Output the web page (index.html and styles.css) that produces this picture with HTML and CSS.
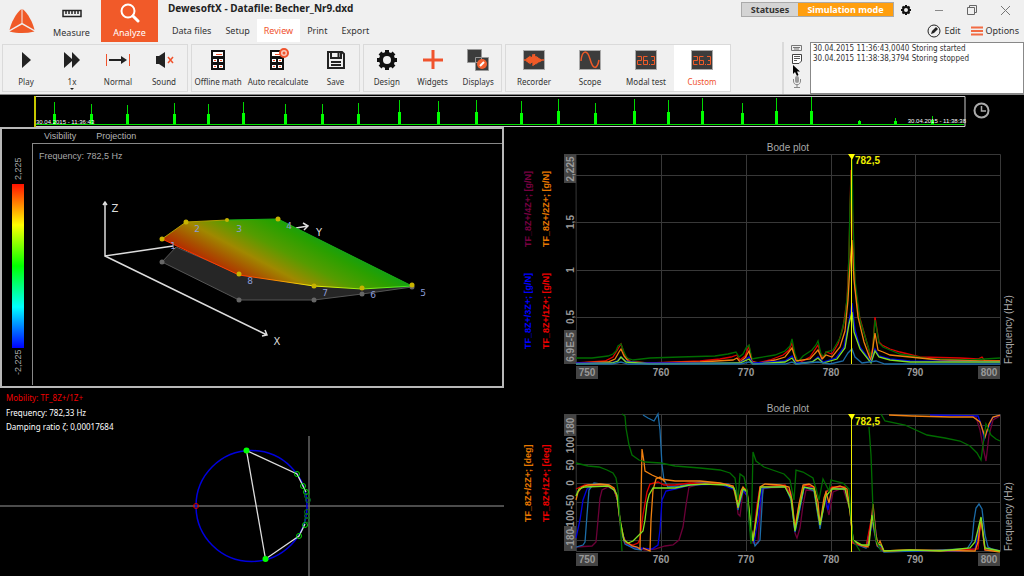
FILE: index.html
```
<!doctype html>
<html lang="en">
<head>
<meta charset="UTF-8">
<title>DewesoftX - Datafile: Becher_Nr9.dxd</title>
	<link rel="stylesheet" href="styles.css">
</head>

<body>
<header class="ribbon">
	<div class="top">
		<div class="logo">
			<svg width="28" height="28" viewBox="0 0 28 28">
				<path fill="#f05a28" d="M13.500 1 L13.500 15 L1.500 22 C3 15 8 5 13.500 1 Z"/>
				<path fill="#f05a28" d="M14.500 1 C20 5 25 15 26.500 22 L14.500 15 Z"/>
				<path fill="#f05a28" d="M14 16.500 L26.500 23.500 C18 25.500 10 25.500 1.500 23.500 Z"/>
			</svg>
		</div>
		<button class="mode">
			<svg width="20" height="22" viewBox="0 0 20 22"><path fill="none" stroke="#222" stroke-width="1.500" d="M1 7.500 H19 V13.500 H1 Z M4 8 V11 M7 8 V11 M10 8 V11 M13 8 V11 M16 8 V11"/></svg>
			Measure
		</button>
		<button class="mode mode-on">
			<svg width="20" height="22" viewBox="0 0 20 22"><circle cx="8" cy="8" r="6.500" fill="none" stroke="#fff" stroke-width="2"/><path stroke="#fff" stroke-width="3" stroke-linecap="round" d="M13 13 L18 18"/></svg>
			Analyze
		</button>
		<div class="document">
			<h1>DewesoftX - Datafile: Becher_Nr9.dxd</h1>
			<nav class="tabs">
				<button>Data files</button>
				<button>Setup</button>
				<button class="tab-on">Review</button>
				<button>Print</button>
				<button>Export</button>
			</nav>
		</div>
		<div class="system">
			<div class="window-row">
				<div class="status">
					<button>Statuses</button>
					<button class="simulation">Simulation mode</button>
				</div>
				<button aria-label="Settings"><svg width="12" height="12" viewBox="0 0 24 24"><use href="#gear"/></svg></button>
				<button aria-label="Minimize"><svg width="10" height="12"><path stroke="#888" d="M1 6.500 H9"/></svg></button>
				<button aria-label="Restore"><svg width="12" height="12"><path fill="none" stroke="#666" d="M1.500 3.500 H8.500 V10.500 H1.500 Z M3.500 3 V1.500 H10.500 V8.500 H9"/></svg></button>
				<button aria-label="Close"><svg width="11" height="12"><path stroke="#777" d="M1 2 L10 11 M10 2 L1 11"/></svg></button>
			</div>
			<div class="edit-row">
				<button><svg width="14" height="14"><circle cx="7" cy="7" r="6" fill="none" stroke="#222"/><path fill="#222" d="M4 10 L5 7 L9 3 L11 5 L7 9 Z"/></svg>Edit</button>
				<button><svg width="12" height="12"><path stroke="#f26b43" stroke-width="2" d="M0 2.500 H12 M0 6 H12 M0 9.500 H12"/></svg>Options</button>
			</div>
		</div>
	</div>

	<div class="toolbar">
		<div class="group play-group">
			<button><svg width="24" height="24"><path fill="#222" d="M8 4 L17 12 L8 20 Z"/></svg>Play</button>
			<button class="speed"><svg width="24" height="24"><path fill="#222" d="M4 4 L12 11 V4 L20 12 L12 20 V13 L4 20 Z"/></svg>1x</button>
			<button><svg width="26" height="24"><path stroke="#f0532d" d="M1.500 6 V18 M24.500 6 V18"/><path stroke="#222" stroke-width="2" d="M4 12 H18"/><path fill="#222" d="M16 8 L22 12 L16 16 Z"/></svg>Normal</button>
			<button><svg width="24" height="24"><path fill="#222" d="M4 8 H7 L13 4 V20 L7 16 H4 Z"/><path stroke="#f0532d" stroke-width="1.500" d="M16 9 L21 15 M21 9 L16 15"/></svg>Sound</button>
		</div>
		<div class="group file-group">
			<button class="offline"><svg width="24" height="24"><use href="#calc"/></svg>Offline math</button>
			<button class="recalc"><svg width="24" height="24"><use href="#calc" x="-1"/><circle cx="18" cy="5" r="4" fill="#f8cabb" stroke="#f0532d" stroke-width="2"/><circle cx="18" cy="5" r="1.500" fill="#f0532d"/></svg>Auto recalculate</button>
			<button class="save"><svg width="24" height="24"><path fill="none" stroke="#222" stroke-width="2" d="M4 4 H18 L20 6 V20 H4 Z M7 4 V10 H17 V4"/><path stroke="#222" stroke-width="2" d="M14.500 5 V9 M7 14 H17 M7 17 H17"/></svg>Save</button>
		</div>
		<div class="group design-group">
			<button><svg width="24" height="24" viewBox="0 0 24 24"><use href="#gear"/></svg>Design</button>
			<button><svg width="24" height="24"><path stroke="#f0532d" stroke-width="3" d="M12 2 V21 M2 12 H22"/></svg>Widgets</button>
			<button><svg width="24" height="24"><path fill="#3c3c3c" stroke="#999" d="M1.500 1.500 H15.500 V14.500 H1.500 Z M9.500 9.500 H22.500 V22.500 H9.500 Z"/><circle cx="16" cy="16" r="5" fill="#f26030"/><path stroke="#fff" stroke-width="2" d="M14 18 L18 14"/></svg>Displays</button>
		</div>
		<div class="group view-group">
			<button><svg width="24" height="24"><use href="#screen"/><path fill="none" stroke="#f05a28" stroke-width="1.300" d="M2 12 H5 V10 V14 L6.500 9 V15 L8 8 V16 L9.500 9 V15 L11 6 V18 L12.500 6 V17 L14 8 V16 L15.500 9 V15 L17 10 V14 L18.500 11 V13 L20 12 H22"/></svg>Recorder</button>
			<button><svg width="24" height="24"><use href="#screen"/><path fill="none" stroke="#f05a28" stroke-width="1.500" d="M3 13 C4 2 9 1 12 11 C15 22 19 22 21 12"/></svg>Scope</button>
			<button><svg width="24" height="24"><use href="#screen"/><use href="#digits"/></svg>Modal test</button>
			<button class="view-on"><svg width="24" height="24"><use href="#screen"/><use href="#digits"/></svg>Custom</button>
		</div>
		<div class="spacer"></div>
		<div class="log-tools">
			<svg width="18" height="48" viewBox="0 0 18 48">
				<path fill="none" stroke="#777" d="M3.500 3.500 H13.500 V8.500 H3.500 Z M5 5.500 H12 M6 7 H11"/>
				<path fill="#fff" stroke="#444" d="M4.500 12.500 H13.500 V19 L11 21.500 H4.500 Z"/>
				<path stroke="#555" d="M6 14.500 H12 M6 16.500 H12 M6 18.500 H9"/>
				<rect x="7" y="34" width="4" height="7" rx="2" fill="#999"/>
				<path fill="none" stroke="#888" d="M5.500 37 V39 C5.500 44 12.500 44 12.500 39 V37 M9 42 V45 M6 45.500 H12"/>
				<path fill="#000" d="M5 23 V32 L7 30 L9 34 L10.500 33 L9 29.500 H12 Z"/>
			</svg>
		</div>
		<div class="log">
			<p>30.04.2015 11:36:43,0040 Storing started</p>
			<p>30.04.2015 11:38:38,3794 Storing stopped</p>
		</div>
	</div>
</header>

<!-- whole recording, one spike per hit -->
<svg class="overview" viewBox="0 95 1024 32">
	<path class="frame" d="M35 96.500 H965 V126.500 H35"/>
	<path stroke="#0d0" d="M36 124.500 H964"/>
	<path class="spike" d="M54.500 102 V124 M91.500 104 V124 M127.500 105 V124 M174.500 103 V124 M208.500 104 V124 M243.500 102 V124 M285.500 104 V124 M322.500 104 V124 M358.500 103 V124 M399.500 100 V124 M438.500 101 V124 M476.500 100 V124 M521.500 101 V124 M558.500 99 V124 M595.500 103 V124 M634.500 99 V124 M668.500 100 V124 M702.500 98 V124 M742.500 103 V124 M776.500 98 V124 M811.500 97 V124 M859.500 120 V124 M895.500 118 V124 M932.500 116 V124"/>
	<path class="spike-foot" d="M54.500 114 V124 M91.500 114 V124 M127.500 114 V124 M174.500 114 V124 M208.500 114 V124 M243.500 113 V124 M285.500 114 V124 M322.500 114 V124 M358.500 114 V124 M399.500 112 V124 M438.500 112 V124 M476.500 112 V124 M521.500 113 V124 M558.500 111 V124 M595.500 113 V124 M634.500 111 V124 M668.500 112 V124 M702.500 111 V124 M742.500 113 V124 M776.500 111 V124 M811.500 111 V124 M859.500 121 V124 M895.500 121 V124 M932.500 120 V124"/>
	<path stroke="#c8c800" stroke-width="2" d="M35 96 V127"/>
	<text class="stamp" x="36" y="124">30.04.2015 - 11:36:43</text>
	<text class="stamp" x="966" y="123" text-anchor="end">30.04.2015 - 11:38:38</text>
	<circle cx="981.500" cy="110.500" r="7" fill="none" stroke="#aaa" stroke-width="2"/>
	<path fill="none" stroke="#aaa" stroke-width="1.500" d="M981.500 106 V111 H986"/>
</svg>

<main class="board">
	<section class="geometry">
		<svg class="scale" viewBox="2 129 30 257">
			<defs>
				<linearGradient id="rainbow" x1="0" y1="0" x2="0" y2="1">
					<stop offset="0" stop-color="#f10"/>
					<stop offset="0.250" stop-color="#ff0"/>
					<stop offset="0.500" stop-color="#0f0"/>
					<stop offset="0.750" stop-color="#0ff"/>
					<stop offset="1" stop-color="#00f"/>
				</linearGradient>
			</defs>
			<rect x="12" y="184" width="12" height="164" fill="url(#rainbow)"/>
			<text class="axis-small" transform="translate(21 180) rotate(-90)">2,225</text>
			<text class="axis-small" transform="translate(21 375) rotate(-90)">-2,225</text>
		</svg>
		<div class="geometry-main">
			<div class="geometry-menu">
				<button>Visibility</button>
				<button>Projection</button>
			</div>
			<svg class="model" viewBox="33 144 469 241">
				<defs>
					<linearGradient id="shape" gradientUnits="userSpaceOnUse" x1="195" y1="257" x2="232" y2="188">
						<stop offset="0" stop-color="#b42800"/>
						<stop offset="0.150" stop-color="#a85000"/>
						<stop offset="0.350" stop-color="#a08800"/>
						<stop offset="0.600" stop-color="#559c00"/>
						<stop offset="0.850" stop-color="#2aa000"/>
						<stop offset="1" stop-color="#12a012"/>
					</linearGradient>
					<linearGradient id="edge" gradientUnits="userSpaceOnUse" x1="162" y1="0" x2="412" y2="0">
						<stop offset="0" stop-color="#f30"/>
						<stop offset="0.350" stop-color="#f40"/>
						<stop offset="0.600" stop-color="#ee0"/>
						<stop offset="1" stop-color="#3e2"/>
					</linearGradient>
				</defs>
				<text class="axis-small" x="39" y="159">Frequency: 782,5 Hz</text>
				<path fill="none" stroke="#ddd" stroke-width="1.500" d="M105 202 V256 L173 246 M105 256 L267 335 M103 205 L105 202 L107 205 M262 336 L267 335 L265 330 M296 228 L308 226 M303 223 L308 226 L304 230"/>
				<path fill="#262626" stroke="#555" d="M162 262 L176 247 L239 274 L314 286 L412 287 L362 294 L314 300 H239 Z"/>
				<path fill="url(#shape)" d="M162 239 L186 222 L227 220 L278 219 L412 286 L362 289 L314 286 L239 275 Z"/>
				<path fill="none" stroke="url(#edge)" d="M162 239 L239 275 L314 286 L362 289 L412 286"/>
				<path fill="none" stroke="#b0a000" d="M162 239 L186 222 L227 220"/>
				<path fill="none" stroke="#18b018" d="M227 220 L278 219 L412 286"/>
				<g fill="#666"><circle cx="162" cy="262" r="2.500"/><circle cx="239" cy="300" r="2.500"/><circle cx="314" cy="300" r="2.500"/><circle cx="362" cy="294" r="2.500"/><circle cx="412" cy="287" r="2.500"/></g>
				<g fill="#c8b400"><circle cx="162" cy="239" r="2.500"/><circle cx="186" cy="222" r="2.500"/><circle cx="227" cy="220" r="2"/><circle cx="278" cy="219" r="2.500"/><circle cx="239" cy="274" r="2.500"/><circle cx="314" cy="286" r="2.500"/><circle cx="362" cy="288" r="2.500"/><circle cx="412" cy="285" r="2.500"/></g>
				<g class="node"><text x="173" y="249">1</text><text x="197" y="232">2</text><text x="239" y="232">3</text><text x="289" y="229">4</text><text x="423" y="296">5</text><text x="373" y="298">6</text><text x="325" y="296">7</text><text x="250" y="284">8</text></g>
				<g class="axis-name"><text x="115" y="212">Z</text><text x="319" y="236">Y</text><text x="277" y="345">X</text></g>
			</svg>
		</div>
	</section>

	<!-- mobility circle fit -->
	<svg class="nyquist" viewBox="0 388 504 188">
		<text class="fit fit-title" x="6" y="401">Mobility: TF_8Z+/1Z+</text>
		<text class="fit" x="6" y="416">Frequency: 782,33 Hz</text>
		<text class="fit" x="6" y="430">Damping ratio ζ: 0,00017684</text>
		<path stroke="#666" stroke-width="1.500" d="M0 506 H504 M309 436 V576"/>
		<circle cx="251.500" cy="506" r="55.500" fill="none" stroke="#00d" stroke-width="1.500"/>
		<path fill="none" stroke="#ddd" stroke-width="1.300" d="M306 492 L297 474 L246.500 450.500 L265.500 559 L299 536 L305 524"/>
		<g fill="none" stroke="#0d0"><circle cx="297" cy="474" r="2.500"/><circle cx="303" cy="486" r="2.500"/><circle cx="306" cy="492" r="2.500"/><circle cx="305" cy="525" r="2.500"/><circle cx="299" cy="536" r="2.500"/></g>
		<g fill="none" stroke="#087020"><circle cx="307" cy="496" r="2.500"/><circle cx="308" cy="500" r="2.500"/><circle cx="307" cy="512" r="2.500"/><circle cx="307" cy="516" r="2.500"/><circle cx="307" cy="520" r="2.500"/></g>
		<circle cx="246.500" cy="450.500" r="3" fill="#0f0"/>
		<circle cx="265.500" cy="559" r="3" fill="#0f0"/>
		<circle cx="196" cy="506" r="2.500" fill="none" stroke="#d00"/>
	</svg>

	<svg class="bode" viewBox="504 127 520 261">
		<path class="grid" d="M576 154.500 H1000.500 V364.500 H576.500 Z M576 175.500 H1000 M576 222.500 H1000 M576 270.500 H1000 M576 317.500 H1000 M661.500 154 V364 M746.500 154 V364 M831.500 154 V364 M915.500 154 V364"/>
		<text class="axis" x="788" y="151" text-anchor="middle">Bode plot</text>
		<g class="channel">
			<text class="c-plum" transform="translate(531 247) rotate(-90)">TF_8Z+/4Z+; [g/N]</text>
			<text class="c-orange" transform="translate(549 247) rotate(-90)">TF_8Z+/2Z+; [g/N]</text>
			<text class="c-blue" transform="translate(531 349) rotate(-90)">TF_8Z+/3Z+; [g/N]</text>
			<text class="c-red" transform="translate(549 349) rotate(-90)">TF_8Z+/1Z+; [g/N]</text>
		</g>
		<path class="limit" d="M564 154 H576 V183 H564 Z M564 330 H576 V364 H564 Z M576 366 H598 V379 H576 Z M978 366 H1000 V379 H978 Z"/>
		<g class="axis-num" text-anchor="middle">
			<text transform="translate(574 169) rotate(-90)">2,225</text>
			<text transform="translate(574 222) rotate(-90)">1,5</text>
			<text transform="translate(574 270) rotate(-90)">1</text>
			<text transform="translate(574 317) rotate(-90)">0,5</text>
			<text transform="translate(574 347) rotate(-90)">6,9E-5</text>
			<text x="587" y="376">750</text><text x="661" y="376">760</text><text x="746" y="376">770</text><text x="831" y="376">780</text><text x="915" y="376">790</text><text x="989" y="376">800</text>
		</g>
		<text class="axis" transform="translate(1012 364) rotate(-90)">Frequency (Hz)</text>
		<g class="curves">
			<polyline class="red" points="576,363 605,361 613,357 618,349 621,344 625,356 631,362 650,363 700,361 720,359 731,357 737,355 740,360 745,356 749,346 752,361 757,363 770,360 783,355 789,350 792,343 795,357 799,363 810,357 818,345 821,355 823,358 826,352 832,354 838,344 843,328 847,300 849,255 850,210 851,170 853,230 855,288 859,315 865,336 871,358 873,345 875,317 879,342 882,345 890,349 900,352 920,357 960,358 978,359 982,357 985,361 1000,361"/>
			<polyline class="green" points="576,358 592,358 600,357 608,356 613,354 616,351 618,346 621,344 624,352 627,358 633,360 650,358 680,357 715,356 728,354 736,352 739,357 743,354 746,348 749,345 752,359 757,358 775,355 785,351 790,346 792,339 795,354 798,362 803,356 812,350 816,345 818,341 821,354 824,357 826,352 833,350 840,338 845,318 848,288 849,250 850,205 852,160 853,220 855,280 860,320 867,343 872,359 875,320 879,343 883,347 890,350 900,354 930,359 970,360 1000,358"/>
			<polyline class="orange" points="576,363 608,362 615,359 619,352 621,349 624,356 629,362 650,363 700,362 733,360 737,358 740,362 745,358 749,351 752,362 760,363 775,360 785,357 792,348 796,361 810,359 818,350 822,359 826,355 832,357 840,347 845,331 848,300 850,265 852,240 854,280 858,317 864,342 871,361 875,333 878,350 883,352 890,355 910,357 940,360 980,361 1000,361"/>
			<polyline class="blue" points="576,363 610,363 617,361 621,357 625,361 640,363 738,363 745,360 749,357 753,363 785,361 792,356 796,363 812,362 818,357 823,362 836,358 844,347 848,327 852,303 855,330 860,347 871,362 875,349 879,356 890,359 910,361 1000,362"/>
			<polyline class="lime" points="576,364 612,363 618,361 621,357 626,362 650,364 740,363 749,359 753,364 785,362 792,358 796,364 812,362 818,358 823,363 837,359 845,348 849,324 852,312 854,332 860,349 871,363 875,351 879,357 890,360 910,362 1000,362"/>
			<polyline class="steel" points="576,364 612,364 621,362 628,364 740,364 749,362 753,364 785,364 792,362 796,364 818,362 830,364 843,361 848,353 852,349 855,357 862,363 876,361 885,364 1000,364"/>
		</g>
		<path stroke="#ee0" d="M851.500 154 V364"/>
		<path fill="#ff0" d="M848 154 H855 L852 160 Z"/>
		<text class="marker" x="855" y="164">782,5</text>
	</svg>

	<svg class="bode-phase" viewBox="504 388 520 188">
		<path class="grid" d="M576 414.500 H1000.500 V551.500 H576.500 Z M576 425.500 H1000 M576 445.500 H1000 M576 464.500 H1000 M576 483.500 H1000 M576 502.500 H1000 M576 521.500 H1000 M576 540.500 H1000 M661.500 414 V551 M746.500 414 V551 M831.500 414 V551 M915.500 414 V551"/>
		<text class="axis" x="788" y="412" text-anchor="middle">Bode plot</text>
		<g class="channel">
			<text class="c-orange" transform="translate(531 522) rotate(-90)">TF_8Z+/2Z+; [deg]</text>
			<text class="c-red" transform="translate(549 522) rotate(-90)">TF_8Z+/1Z+; [deg]</text>
		</g>
		<path class="limit" d="M564 414 H576 V436 H564 Z M564 526 H576 V551 H564 Z M576 553 H598 V566 H576 Z M978 553 H1000 V566 H978 Z"/>
		<g class="axis-num" text-anchor="middle">
			<text transform="translate(574 426) rotate(-90)">180</text>
			<text transform="translate(574 445) rotate(-90)">100</text>
			<text transform="translate(574 465) rotate(-90)">50</text>
			<text transform="translate(574 483) rotate(-90)">0</text>
			<text transform="translate(574 502) rotate(-90)">-50</text>
			<text transform="translate(574 520) rotate(-90)">-100</text>
			<text transform="translate(574 539) rotate(-90)">-180</text>
			<text x="587" y="563">750</text><text x="661" y="563">760</text><text x="746" y="563">770</text><text x="831" y="563">780</text><text x="915" y="563">790</text><text x="989" y="563">800</text>
		</g>
		<text class="axis" transform="translate(1012 551) rotate(-90)">Frequency (Hz)</text>
		<g class="curves">
			<polyline class="plum" points="576,547 592,546 596,542 598,520 600,498 602,490 608,487 614,490 617,498 620,522 624,542 633,547 645,550 655,549 665,546 673,545 679,540 683,527 686,505 689,487 700,484 725,484 733,487 736,495 738,514 740,516 743,491 747,495 750,525 753,543 758,543 761,500 764,488 785,487 791,492 795,533 797,538 800,528 803,505 806,490 815,491 820,525 825,500 829,515 833,492 843,488 850,510 853,543"/>
			<polyline class="plum" points="970,415 976,417 980,430 984,452 986,461 989,435 993,420 1000,416"/>
			<polyline class="blue" points="576,538 580,520 583,500 587,489 592,486 608,486 615,490 618,503 621,530 627,545 638,548 652,549 658,545 660,530 662,500 666,491 675,489 690,485 720,484 735,490 738,509 743,490 747,496 750,525 754,543 758,520 762,488 785,486 791,495 795,532 800,508 804,488 814,488 820,525 825,496 828,510 832,488 845,488 850,505 853,542 866,547 871,530 873,508 877,542 884,551 960,551 975,549 981,518 985,550 1000,551"/>
			<polyline class="blue" points="930,415 978,416 982,427 984,440 987,432 992,418 1000,415"/>
			<polyline class="steel" points="576,547 583,545 585,542 587,515 589,490 594,483 608,485 614,490 618,501 621,530 625,544 635,549 642,550"/>
			<polyline class="steel" points="643,415 648,418 654,421 658,414 660,430 662,465 664,480 668,487 680,486 700,482 728,484 736,491 738,510 743,490 747,492 750,530 755,546 760,540 763,488 785,486 791,500 795,532 800,508 804,487 814,491 820,529 826,492 832,488 845,489 850,505 853,543 866,548 872,520 877,546 884,552 967,549 972,541 974,520 976,508 979,504 982,509 985,535 988,547 992,549 1000,551"/>
			<polyline class="red" points="576,489 585,485 608,485 614,489 618,501 621,530 626,543 633,545 638,543 640,539 643,515 647,492 650,484 658,482 664,485 675,485 690,483 725,484 733,486 737,503 743,488 747,490 750,525 753,541 757,505 760,487 785,485 791,496 795,527 799,505 804,485 814,487 820,525 826,492 832,487 845,487 850,505 853,543 866,547 872,515 877,545 884,551 910,550 940,551 978,549 981,520 985,550 1000,551"/>
			<polyline class="orange" points="576,500 578,492 582,487 588,485 600,484 609,485 614,488 617,496 620,520 624,540 632,546 637,547 640,549 641,500 642,449 644,462 645,471 652,475 661,479 675,481 700,481 720,483 733,486 737,498 738,508 741,491 743,487 747,492 750,520 753,541 757,515 760,487 765,484 780,485 789,487 792,500 795,529 799,504 803,485 809,484 814,487 818,502 820,525 824,498 826,492 829,503 832,488 840,486 847,489 851,520 853,540 860,545 868,547 871,525 873,504 876,535 878,545 880,541 884,551 910,550 975,551 978,542 981,518 985,550 1000,552"/>
			<polyline class="orange" points="643,548 650,551 651,520 653,490 656,479 660,477 665,482"/>
			<polyline class="orange" points="889,415 912,416 950,417 973,417 980,422 985,437 989,424 993,417 1000,415"/>
			<polyline class="lime" points="576,496 579,489 585,487 608,486 614,490 617,495 620,520 624,540 628,543 633,541 638,536 643,531 645,520 647,503 649,495 653,488 675,488 690,485 705,484 725,485 734,488 738,507 743,489 747,491 751,527 753,541 758,505 761,487 785,487 791,498 795,531 800,505 804,487 814,489 820,525 826,496 832,489 845,489 850,510 853,540 862,545 869,545 872,515 877,544 881,545 884,551 910,550 940,551 960,549 970,548 975,542 981,517 985,548 990,549 1000,551"/>
			<polyline class="green" points="576,463 588,466 599,467 607,470 613,473 616,478 618,490 620,520 622,551"/>
			<polyline class="green" points="622,414 625,416 626,428 629,445 632,455 639,460 645,462 661,463 675,466 700,468 720,470 730,473 735,478 738,500 740,474 744,477 747,490 749,520 751,544 753,452 756,461 764,467 784,474 790,480 794,500 796,470 803,472 813,478 819,500 823,479 829,491 831,480 843,483 849,489 851,515 853,540 860,551"/>
			<polyline class="green" points="869,427 871,455 873,510 876,540 881,551"/>
			<polyline class="green" points="881,414 885,421 905,425 927,435 945,438 960,441 970,446 977,453 981,460 983,445 986,424 991,435 996,439 1000,441"/>
		</g>
		<path stroke="#ee0" d="M851.500 414 V552"/>
		<path fill="#ff0" d="M848 414 H855 L852 420 Z"/>
		<text class="marker" x="855" y="425">782,5</text>
	</svg>
</main>

<svg class="symbols" width="0" height="0" aria-hidden="true">
	<defs>
		<g id="gear">
			<circle cx="12" cy="12" r="6" fill="none" stroke="#111" stroke-width="4"/>
			<path stroke="#111" stroke-width="4" d="M12 2 V6 M12 18 V22 M2 12 H6 M18 12 H22 M5 5 L8 8 M16 16 L19 19 M5 19 L8 16 M16 8 L19 5"/>
		</g>
		<g id="calc">
			<rect x="5" y="2" width="14" height="20" fill="#111"/>
			<path fill="#fff" d="M7 4 H17 V8 H7 Z M7 11 H11 V14 H7 Z M13 11 H17 V14 H13 Z M7 17 H11 V20 H7 Z M13 17 H17 V20 H13 Z"/>
			<path stroke="#f0532d" d="M10 6.500 H16 M8 12.500 H10 M14 12.500 H16 M8 18.500 H10 M14 18.500 H16"/>
		</g>
		<rect id="screen" x="1.500" y="2.500" width="21" height="19" fill="#3c3c3c" stroke="#aaa"/>
		<path id="digits" fill="none" stroke="#f05a28" d="M3.500 8.500 H7.500 V12.500 H3.500 V16.500 H7.500 M13.500 8.500 H9.500 V16.500 H13.500 V12.500 H9.500 M15 16.500 H16 M17 8.500 H20.500 V16.500 H17 M18 12.500 H20"/>
	</defs>
</svg>
</body>
</html>
```
FILE: styles.css
```
* {
	box-sizing: border-box;
}

body {
	margin: 0;
	background-color: #000000;
	font-family: "Noto Sans", "Open Sans", sans-serif;
	font-size: 8px;
	line-height: 12px;
	color: #333333;
}

button {
	margin: 0;
	padding: 0;
	border: 0;
	background: none;
	font: inherit;
	color: inherit;
	white-space: nowrap;
	cursor: pointer;
}

svg {
	display: block;
}

.symbols {
	position: absolute;
}

/* ribbon */
.ribbon {
	background-color: #F0F0F0;
	border-bottom: 1px solid #888888;
}

.top {
	display: flex;
	height: 42px;
}

.logo {
	width: 42px;
	padding: 8px;
}

.mode {
	display: flex;
	flex-direction: column;
	align-items: center;
	justify-content: space-between;
	width: 59px;
	padding: 3px 0;
	font-size: 9px;
}

.mode-on {
	width: 57px;
	background-color: #F15A29;
	color: #FFFFFF;
}

.document {
	flex: 1;
	display: flex;
	flex-direction: column;
	justify-content: space-between;
	padding-left: 7px;
}

h1 {
	margin: 0;
	padding: 2px 3px;
	font-size: 10px;
	line-height: 13px;
	color: #222222;
}

.tabs {
	display: flex;
	height: 23px;
	font-size: 9px;
}

.tabs button {
	padding: 0 7px;
}

.tabs .tab-on {
	background-color: #FFFFFF;
	color: #F0532D;
}

.system {
	width: 283px;
	font-size: 9px;
}

.window-row {
	display: flex;
	align-items: center;
	gap: 22px;
	padding-top: 2px;
}

.status {
	display: flex;
	width: 153px;
	height: 15px;
	margin-right: -16px;
	border: 1px solid #AAAAAA;
	background-color: #D4D4D4;
	font-weight: bold;
}

.status button {
	width: 56px;
}

.status .simulation {
	flex: 1;
	background-color: #FF9F0F;
	color: #FFFFFF;
}

.edit-row {
	display: flex;
	justify-content: flex-end;
	gap: 10px;
	padding: 7px 5px 0 0;
}

.edit-row button {
	display: flex;
	align-items: center;
	gap: 3px;
}

.toolbar {
	display: flex;
	gap: 3px;
	padding-left: 2px;
}

.group {
	display: flex;
	height: 48px;
	margin: 2px 0;
	border: 1px solid #DADADA;
}

.group button {
	display: flex;
	flex-direction: column;
	align-items: center;
	justify-content: space-between;
	flex: 1;
	padding: 3px 0;
}

.group svg {
	flex-shrink: 0;
}

.play-group {
	width: 186px;
}

.file-group {
	width: 169px;
}

.group .offline {
	flex: 0 0 52px;
}

.group .recalc {
	flex: 0 0 68px;
}

.design-group {
	width: 139px;
}

.view-group {
	width: 226px;
}

.group .view-on {
	background-color: #FFFFFF;
	color: #F0532D;
}

.group .speed {
	position: relative;
}

.speed::after {
	content: "";
	position: absolute;
	bottom: 1px;
	border: 2px solid transparent;
	border-top-color: #222222;
	border-bottom: 0;
}

.spacer {
	flex: 1;
}

.log-tools {
	padding: 0 1px 0 4px;
	border-left: 2px solid #DADADA;
}

.log {
	width: 214px;
	padding: 1px 2px;
	border: 1px solid #888888;
	background-color: #FFFFFF;
}

.log p {
	margin: 0;
	font-family: "DejaVu Sans Condensed", "DejaVu Sans", sans-serif;
	font-size: 8px;
	line-height: 10px;
}

/* charts */
.overview {
	width: 100%;
}

.frame {
	fill: none;
	stroke: #CCCCCC;
}

.spike {
	stroke: #00D800;
}

.spike-foot {
	stroke: #00FF00;
	stroke-width: 3;
}

.board {
	display: grid;
	grid-template-columns: 504fr 520fr;
	grid-template-areas: "geometry bode" "nyquist phase";
}

.geometry {
	grid-area: geometry;
	display: flex;
	border: 2px solid #B8B8B8;
}

.nyquist {
	grid-area: nyquist;
	width: 100%;
}

.bode {
	grid-area: bode;
	width: 100%;
}

.bode-phase {
	grid-area: phase;
	width: 100%;
}

.scale {
	width: 6%;
}

.geometry-main {
	flex: 1;
}

.geometry-menu {
	height: 14px;
	padding-left: 12px;
	display: flex;
	gap: 20px;
	font: 9px/12px "Liberation Sans", Arial, sans-serif;
	color: #B4B4B4;
}

.model {
	width: 100%;
	border: 1px solid #888888;
	border-width: 1px 0 0 1px;
}

text {
	font: 10px "Liberation Sans", Arial, sans-serif;
	fill: #A8A8A8;
}

.axis-small {
	font-size: 9px;
}

.axis-num text {
	font-weight: bold;
	fill: #999999;
}

.limit {
	fill: #444444;
}

.grid {
	fill: none;
	stroke: #383838;
}

.channel text {
	font-size: 9px;
	font-weight: bold;
}

.channel .c-plum { fill: #780040; }
.channel .c-orange { fill: #E87800; }
.channel .c-blue { fill: #0000FF; }
.channel .c-red { fill: #EE0000; }

.curves {
	fill: none;
	stroke-width: 1.3;
}

.green { stroke: #006C00; }
.red { stroke: #E00000; }
.orange { stroke: #F08010; }
.blue { stroke: #0000E0; }
.lime { stroke: #80E020; }
.steel { stroke: #1C6CA8; }
.plum { stroke: #6C0038; }

.marker {
	font-weight: bold;
	fill: #EEEE00;
}

.node text {
	font: 9px "DejaVu Sans", sans-serif;
	fill: #8C9CD8;
	text-anchor: middle;
}

.axis-name text {
	font: 10px "DejaVu Sans", sans-serif;
	fill: #DDDDDD;
	text-anchor: middle;
}

text.stamp {
	font-size: 6px;
	fill: #FFFFFF;
}

text.fit {
	font: 8px "Noto Sans", "Open Sans", sans-serif;
	fill: #FFFFFF;
}

text.fit-title {
	fill: #F00000;
}
```
